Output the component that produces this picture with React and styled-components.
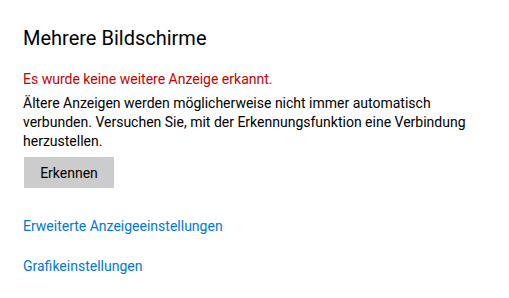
import React from "react";
import styled, { createGlobalStyle } from "styled-components";

const GlobalStyle = createGlobalStyle`
  html, body {
    margin: 0;
    padding: 0;
    background: #ffffff;
  }
  body {
    font-family: Roboto, "Noto Sans", sans-serif;
    color: #000000;
  }
`;

const Page = styled.div`
  width: 509px;
  height: 298px;
  box-sizing: border-box;
  padding: 24px 23px 0 23px;
  display: flex;
  flex-direction: column;
  align-items: flex-start;
`;

const Title = styled.h1`
  margin: 0;
  font-size: 20px;
  font-weight: 400;
  line-height: 28px;
  color: #000000;
`;

const ErrorText = styled.p`
  margin: 17px 0 0 0;
  font-size: 14px;
  line-height: 20px;
  color: #c80000;
`;

const Description = styled.p`
  margin: 5px 0 0 0;
  font-size: 14px;
  line-height: 19px;
  max-width: 460px;
`;

const Button = styled.button`
  margin-top: 6px;
  margin-left: 1px;
  width: 90px;
  height: 31px;
  border: none;
  background: #cccccc;
  font-family: inherit;
  font-size: 14px;
  color: #000000;
  padding: 0;
`;

const Link = styled.a`
  font-size: 14px;
  line-height: 20px;
  color: #0078d7;
  text-decoration: none;
  margin-top: ${(p) => p.$gap}px;
`;

export default function App() {
  return (
    <>
      <GlobalStyle />
      <Page>
        <Title>Mehrere Bildschirme</Title>
        <ErrorText>Es wurde keine weitere Anzeige erkannt.</ErrorText>
        <Description>
          Ältere Anzeigen werden möglicherweise nicht immer automatisch
          verbunden. Versuchen Sie, mit der Erkennungsfunktion eine Verbindung
          herzustellen.
        </Description>
        <Button>Erkennen</Button>
        <Link href="#" $gap={28}>
          Erweiterte Anzeigeeinstellungen
        </Link>
        <Link href="#" $gap={20}>
          Grafikeinstellungen
        </Link>
      </Page>
    </>
  );
}
